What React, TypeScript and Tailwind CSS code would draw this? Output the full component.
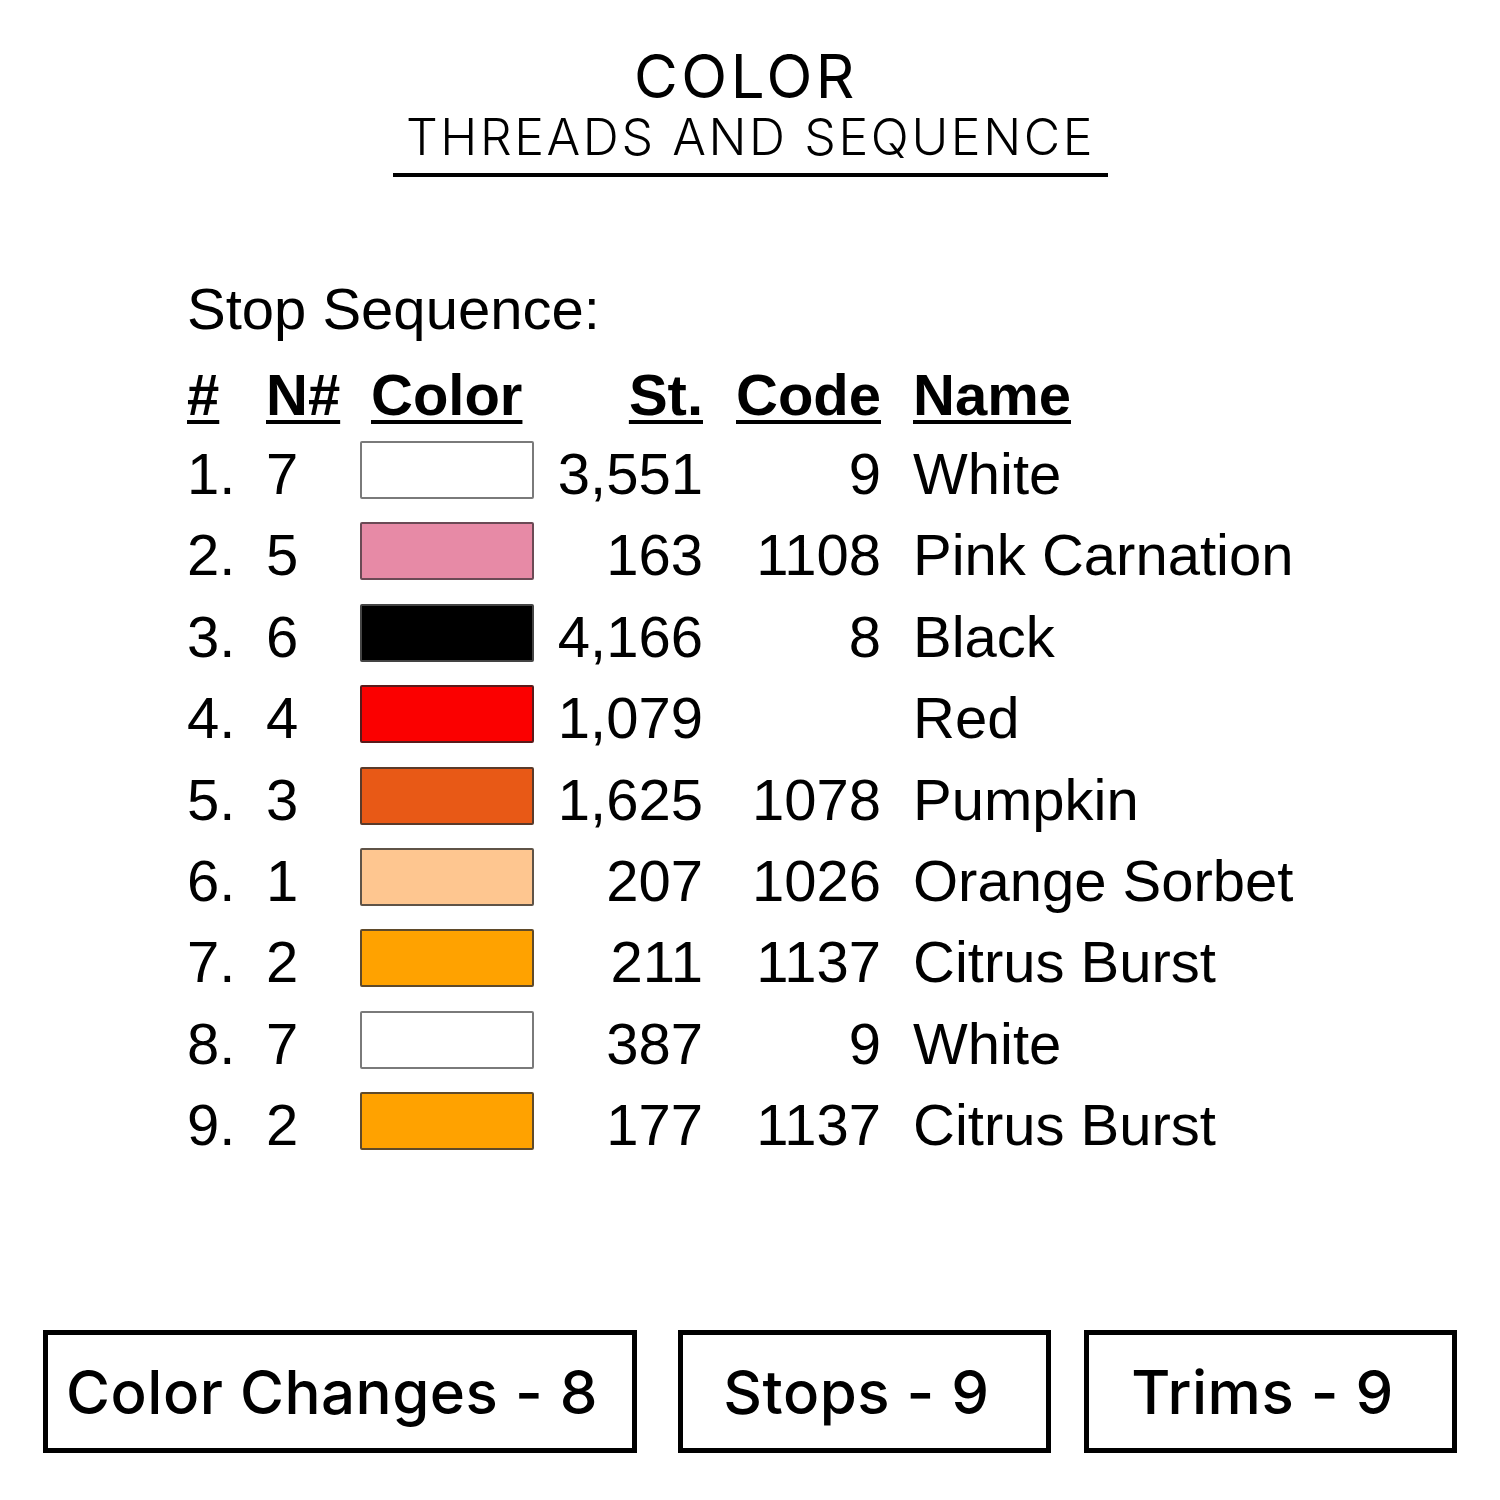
import React from 'react';

interface StopRow {
  n: number;
  needle: number;
  color: string;
  border: string;
  stitches: string;
  code: string;
  name: string;
}

const rows: StopRow[] = [
  { n: 1, needle: 7, color: 'bg-white', border: 'border-[#7a7a7a]', stitches: '3,551', code: '9', name: 'White' },
  { n: 2, needle: 5, color: 'bg-[#e78aa6]', border: 'border-[#6b4a55]', stitches: '163', code: '1108', name: 'Pink Carnation' },
  { n: 3, needle: 6, color: 'bg-black', border: 'border-[#444]', stitches: '4,166', code: '8', name: 'Black' },
  { n: 4, needle: 4, color: 'bg-[#fb0000]', border: 'border-[#5a1a1a]', stitches: '1,079', code: '', name: 'Red' },
  { n: 5, needle: 3, color: 'bg-[#e85916]', border: 'border-[#5a3a2a]', stitches: '1,625', code: '1078', name: 'Pumpkin' },
  { n: 6, needle: 1, color: 'bg-[#fec690]', border: 'border-[#5f5347]', stitches: '207', code: '1026', name: 'Orange Sorbet' },
  { n: 7, needle: 2, color: 'bg-[#ffa200]', border: 'border-[#5f4a2a]', stitches: '211', code: '1137', name: 'Citrus Burst' },
  { n: 8, needle: 7, color: 'bg-white', border: 'border-[#7a7a7a]', stitches: '387', code: '9', name: 'White' },
  { n: 9, needle: 2, color: 'bg-[#ffa200]', border: 'border-[#5f4a2a]', stitches: '177', code: '1137', name: 'Citrus Burst' },
];

const cols = 'grid grid-cols-[79px_94px_173px_170px_178px_1fr]';
const ul = 'underline decoration-[4px] underline-offset-[5px]';

const StatBox = ({ label, className }: { label: string; className: string }) => (
  <div className={`h-[123px] border-[5px] border-black flex items-center justify-center pr-4 ${className}`}>
    <span className="text-[60px] font-medium text-black leading-none tracking-[0.5px]">{label}</span>
  </div>
);

export default function App() {
  return (
    <div className="w-[1500px] h-[1500px] bg-white text-black relative overflow-hidden font-['Inter',sans-serif]">
      {/* title */}
      <div className="flex flex-col items-center pt-[44px]">
        <div className="text-[60px] font-normal leading-[64px] tracking-[3.5px] ml-[-8px]">COLOR</div>
        <div className="w-[715px] ml-[1px] border-b-[4px] border-black text-center text-[50px] font-light leading-[58px] tracking-[2.6px] pb-[7px]">
          THREADS AND SEQUENCE
        </div>
      </div>

      {/* stop sequence table */}
      <div className="pl-[187px] mt-[100px] font-['Liberation_Sans',Arial,sans-serif] text-[58px]">
        <div className="leading-[64px]">Stop Sequence:</div>
        <div className={`${cols} leading-[77px] font-bold mt-[15px]`}>
          <span className={ul}>#</span>
          <span className={ul}>N#</span>
          <span className="pl-[11px]"><span className={ul}>Color</span></span>
          <span className="text-right"><span className={ul}>St.</span></span>
          <span className="text-right"><span className={ul}>Code</span></span>
          <span className="pl-[32px]"><span className={ul}>Name</span></span>
        </div>
        {rows.map((r) => (
          <div key={r.n} className={`${cols} leading-[81.4px]`}>
            <span>{r.n}.</span>
            <span>{r.needle}</span>
            <span className="pt-[8px]">
              <span className={`block h-[58px] w-[174px] rounded-[2px] border-[2px] ${r.border} ${r.color}`} />
            </span>
            <span className="text-right">{r.stitches}</span>
            <span className="text-right">{r.code}</span>
            <span className="pl-[32px]">{r.name}</span>
          </div>
        ))}
      </div>

      {/* stats */}
      <div className="absolute left-[43px] top-[1330px] flex">
        <StatBox label="Color Changes - 8" className="w-[594px]" />
        <StatBox label="Stops - 9" className="w-[373px] ml-[41px]" />
        <StatBox label="Trims - 9" className="w-[373px] ml-[33px]" />
      </div>
    </div>
  );
}
